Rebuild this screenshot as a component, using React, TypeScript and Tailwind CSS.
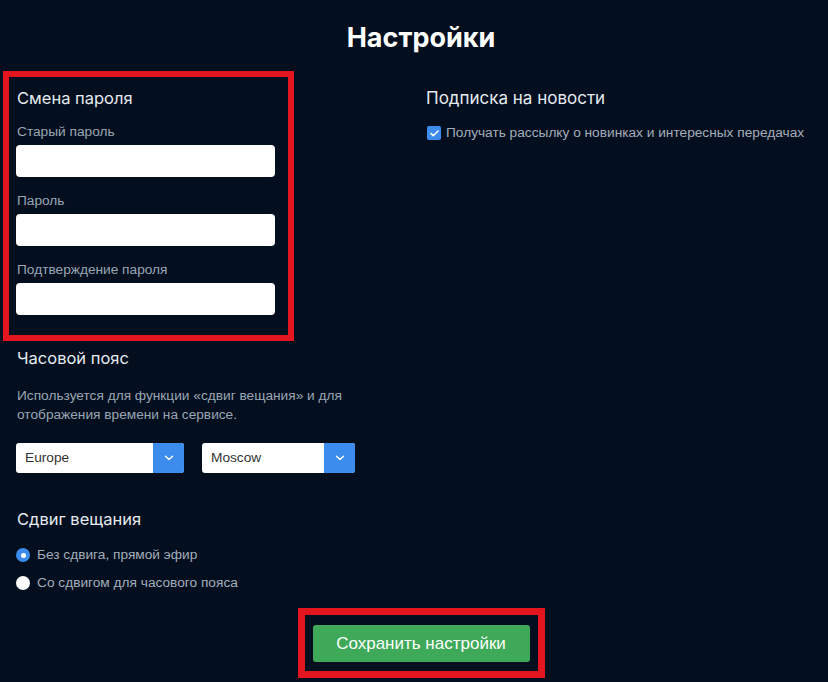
import React from "react";

// Chevron used in the select buttons
const Chevron = () => (
  <svg width="10" height="6" viewBox="0 0 10 6" fill="none">
    <path d="M1.5 1.2l3.5 3.4 3.5-3.4" stroke="white" strokeWidth="1.4" strokeLinecap="round" strokeLinejoin="round" />
  </svg>
);

const Field = ({ label, first }: { label: string; first?: boolean }) => (
  <div className={first ? "" : "mt-[14px]"}>
    <div className="text-[13.7px] leading-[20px] text-[#9aa6b4] pl-[1px]">{label}</div>
    <div className="mt-[3px] h-[32px] w-[259px] rounded-[4px] bg-white" />
  </div>
);

const Select = ({ value, width }: { value: string; width: string }) => (
  <div className={`flex h-[30px] overflow-hidden rounded-[3px] bg-white ${width}`}>
    <div className="flex flex-1 items-center pl-[9px] text-[13.7px] text-[#333]">{value}</div>
    <div className="flex w-[31px] items-center justify-center bg-[#3b8ced]">
      <Chevron />
    </div>
  </div>
);

const Radio = ({ label, checked }: { label: string; checked?: boolean }) => (
  <div className="flex h-[28px] items-center">
    <span
      className={`flex h-[14px] w-[14px] items-center justify-center rounded-full ${
        checked ? "bg-[#3b8ced]" : "bg-white"
      }`}
    >
      {checked && <span className="h-[5px] w-[5px] rounded-full bg-white" />}
    </span>
    <span className="ml-[7px] text-[13.7px] text-[#a3adba]">{label}</span>
  </div>
);

export default function App() {
  return (
    <div
      className="min-h-[682px] w-[828px] bg-[#030f1f] text-[#e6ebf1]"
      style={{ fontFamily: '"Liberation Sans", Arial, sans-serif' }}
    >
      {/* Title */}
      <div className="flex justify-center pl-[14px] pt-[21px]">
        <h1 className="text-[27px] font-bold leading-[34px] text-white" style={{ fontFamily: "Inter, sans-serif" }}>
          Настройки
        </h1>
      </div>

      <div className="mt-[16px] flex">
        {/* Left column */}
        <div className="w-[426px] pl-[3px]">
          <div className="w-[291px] border-[6px] border-[#e3161f] pb-[20px] pl-[7px] pt-[9px]">
            <h2 className="pl-[1px] text-[16.5px] leading-[24px]" style={{ fontFamily: "Inter, sans-serif" }}>
              Смена пароля
            </h2>
            <div className="mt-[12px]">
              <Field label="Старый пароль" first />
              <Field label="Пароль" />
              <Field label="Подтверждение пароля" />
            </div>
          </div>

          <div className="pl-[13px]">
            <h2 className="mt-[5px] pl-[1px] text-[16.5px] leading-[24px]" style={{ fontFamily: "Inter, sans-serif" }}>
              Часовой пояс
            </h2>
            <p className="mt-[16px] w-[340px] pl-[1px] text-[13.7px] leading-[19px] text-[#9aa6b4]">
              Используется для функции «сдвиг вещания» и для отображения времени на сервисе.
            </p>
            <div className="mt-[19px] flex gap-[18px]">
              <Select value="Europe" width="w-[168px]" />
              <Select value="Moscow" width="w-[153px]" />
            </div>

            <h2 className="mt-[34px] pl-[1px] text-[16.5px] leading-[24px]" style={{ fontFamily: "Inter, sans-serif" }}>
              Сдвиг вещания
            </h2>
            <div className="mt-[10px]">
              <Radio label="Без сдвига, прямой эфир" checked />
              <Radio label="Со сдвигом для часового пояса" />
            </div>
          </div>
        </div>

        {/* Right column */}
        <div className="pt-[15px]">
          <h2 className="text-[17px] leading-[24px]" style={{ fontFamily: "Inter, sans-serif" }}>
            Подписка на новости
          </h2>
          <label className="mt-[13px] flex items-center">
            <span className="ml-[1px] flex h-[14px] w-[14px] items-center justify-center rounded-[2px] bg-[#3b8ced]">
              <svg width="9" height="7" viewBox="0 0 9 7" fill="none">
                <path d="M1 3.5l2.3 2.2L8 1" stroke="white" strokeWidth="1.6" strokeLinecap="round" strokeLinejoin="round" />
              </svg>
            </span>
            <span className="ml-[5px] text-[13.7px] leading-[20px] text-[#a3adba]">
              Получать рассылку о новинках и интересных передачах
            </span>
          </label>
        </div>
      </div>

      {/* Save button */}
      <div className="mt-[11px] flex justify-center pl-[14px]">
        <div className="border-[7px] border-[#e3161f] px-[8px] pb-[9px] pt-[10px]">
          <button className="h-[37px] w-[217px] rounded-[3px] bg-[#3ea958] text-[17px] text-white">
            Сохранить настройки
          </button>
        </div>
      </div>
    </div>
  );
}
